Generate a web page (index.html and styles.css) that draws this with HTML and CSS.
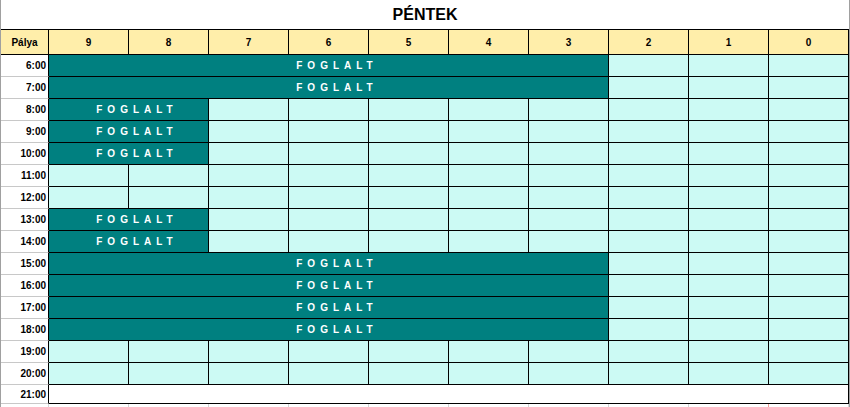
FILE: index.html
```html
<!DOCTYPE html>
<html lang="hu">
<head>
<meta charset="utf-8">
<title>Péntek</title>
<link rel="stylesheet" href="styles.css">
</head>
<body>
<div class="sheet">
  <div class="title">PÉNTEK</div>
  <table class="grid">
    <colgroup>
      <col class="c-time">
      <col class="c-lane"><col class="c-lane"><col class="c-lane"><col class="c-lane"><col class="c-lane">
      <col class="c-lane"><col class="c-lane"><col class="c-lane"><col class="c-lane"><col class="c-lane">
    </colgroup>
    <thead>
      <tr class="head">
        <th class="hcell first">Pálya</th>
        <th class="hcell">9</th><th class="hcell">8</th><th class="hcell">7</th><th class="hcell">6</th><th class="hcell">5</th>
        <th class="hcell">4</th><th class="hcell">3</th><th class="hcell">2</th><th class="hcell">1</th><th class="hcell">0</th>
      </tr>
    </thead>
    <tbody>
      <tr class="row"><td class="time">6:00</td><td class="busy" colspan="7">FOGLALT</td><td class="free"></td><td class="free"></td><td class="free"></td></tr>
      <tr class="row"><td class="time">7:00</td><td class="busy" colspan="7">FOGLALT</td><td class="free"></td><td class="free"></td><td class="free"></td></tr>
      <tr class="row"><td class="time">8:00</td><td class="busy" colspan="2">FOGLALT</td><td class="free"></td><td class="free"></td><td class="free"></td><td class="free"></td><td class="free"></td><td class="free"></td><td class="free"></td><td class="free"></td></tr>
      <tr class="row"><td class="time">9:00</td><td class="busy" colspan="2">FOGLALT</td><td class="free"></td><td class="free"></td><td class="free"></td><td class="free"></td><td class="free"></td><td class="free"></td><td class="free"></td><td class="free"></td></tr>
      <tr class="row"><td class="time">10:00</td><td class="busy" colspan="2">FOGLALT</td><td class="free"></td><td class="free"></td><td class="free"></td><td class="free"></td><td class="free"></td><td class="free"></td><td class="free"></td><td class="free"></td></tr>
      <tr class="row"><td class="time">11:00</td><td class="free"></td><td class="free"></td><td class="free"></td><td class="free"></td><td class="free"></td><td class="free"></td><td class="free"></td><td class="free"></td><td class="free"></td><td class="free"></td></tr>
      <tr class="row"><td class="time">12:00</td><td class="free"></td><td class="free"></td><td class="free"></td><td class="free"></td><td class="free"></td><td class="free"></td><td class="free"></td><td class="free"></td><td class="free"></td><td class="free"></td></tr>
      <tr class="row"><td class="time">13:00</td><td class="busy" colspan="2">FOGLALT</td><td class="free"></td><td class="free"></td><td class="free"></td><td class="free"></td><td class="free"></td><td class="free"></td><td class="free"></td><td class="free"></td></tr>
      <tr class="row"><td class="time">14:00</td><td class="busy" colspan="2">FOGLALT</td><td class="free"></td><td class="free"></td><td class="free"></td><td class="free"></td><td class="free"></td><td class="free"></td><td class="free"></td><td class="free"></td></tr>
      <tr class="row"><td class="time">15:00</td><td class="busy" colspan="7">FOGLALT</td><td class="free"></td><td class="free"></td><td class="free"></td></tr>
      <tr class="row"><td class="time">16:00</td><td class="busy" colspan="7">FOGLALT</td><td class="free"></td><td class="free"></td><td class="free"></td></tr>
      <tr class="row"><td class="time">17:00</td><td class="busy" colspan="7">FOGLALT</td><td class="free"></td><td class="free"></td><td class="free"></td></tr>
      <tr class="row"><td class="time">18:00</td><td class="busy" colspan="7">FOGLALT</td><td class="free"></td><td class="free"></td><td class="free"></td></tr>
      <tr class="row"><td class="time">19:00</td><td class="free"></td><td class="free"></td><td class="free"></td><td class="free"></td><td class="free"></td><td class="free"></td><td class="free"></td><td class="free"></td><td class="free"></td><td class="free"></td></tr>
      <tr class="row"><td class="time">20:00</td><td class="free"></td><td class="free"></td><td class="free"></td><td class="free"></td><td class="free"></td><td class="free"></td><td class="free"></td><td class="free"></td><td class="free"></td><td class="free"></td></tr>
      <tr class="row last"><td class="time">21:00</td><td class="closed" colspan="10"></td></tr>
      <tr class="tail"><td class="g"></td><td class="g"></td><td class="g"></td><td class="g"></td><td class="g"></td><td class="g"></td><td class="g"></td><td class="g"></td><td class="g"></td><td class="g red"></td><td class="g"></td></tr>
    </tbody>
  </table>
</div>
</body>
</html>
```
FILE: styles.css
```css
html, body {
  margin: 0;
  padding: 0;
  background: #ffffff;
}

.sheet {
  width: 848px;
  height: 407px;
  overflow: hidden;
  border-left: 1px solid #a0a0a0;
  border-right: 1px solid #a0a0a0;
  font-family: "Liberation Sans", Arial, sans-serif;
  color: #000000;
}

.title {
  height: 29px;
  line-height: 29px;
  text-align: center;
  font-size: 16px;
  font-weight: bold;
}

.grid {
  width: 848px;
  table-layout: fixed;
  border-collapse: separate;
  border-spacing: 0;
  font-size: 10px;
  font-weight: bold;
}

.c-time { width: 48px; }
.c-lane { width: 80px; }

.grid th, .grid td {
  padding: 0;
  box-sizing: border-box;
  border-right: 1px solid #000000;
  border-bottom: 1px solid #000000;
  overflow: hidden;
  white-space: nowrap;
  vertical-align: middle;
}

.head { height: 26px; }

.hcell {
  background: #ffeeaa;
  border-top: 1px solid #000000;
  text-align: center;
  font-weight: bold;
}

.row { height: 22px; }
.row.last { height: 19px; }

.time {
  text-align: right;
  padding-right: 2px !important;
  background: #ffffff;
  border-bottom-color: #c8c8c8 !important;
}

.busy {
  background: #008080;
  color: #ffffff;
  text-align: center;
  letter-spacing: 5px;
  padding-left: 17px !important;
}

.free { background: #ccfaf4; }

.closed { background: #ffffff; }

.tail { height: 4px; }
.tail .g {
  border-right: 1px solid #d4d4d4;
  border-bottom: none;
}
.tail .g.red { border-right-color: #f2a09a; }
```
